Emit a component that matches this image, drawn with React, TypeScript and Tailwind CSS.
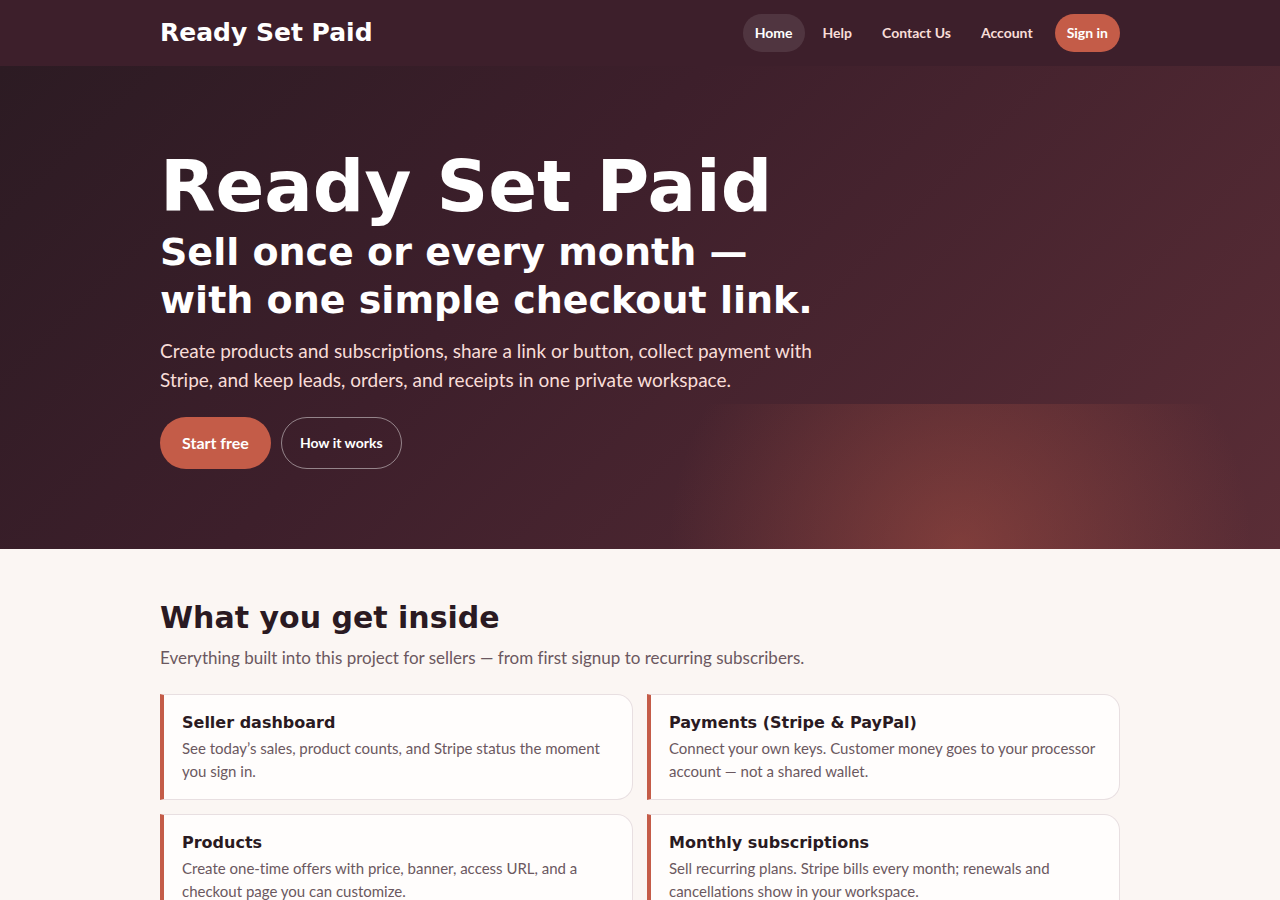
const navLinks = [
  { label: 'Home', active: true },
  { label: 'Help', active: false },
  { label: 'Contact Us', active: false },
  { label: 'Account', active: false },
];

const features = [
  {
    title: 'Seller dashboard',
    text: 'See today’s sales, product counts, and Stripe status the moment you sign in.',
  },
  {
    title: 'Payments (Stripe & PayPal)',
    text: 'Connect your own keys. Customer money goes to your processor account — not a shared wallet.',
  },
  {
    title: 'Products',
    text: 'Create one-time offers with price, banner, access URL, and a checkout page you can customize.',
  },
  {
    title: 'Monthly subscriptions',
    text: 'Sell recurring plans. Stripe bills every month; renewals and cancellations show in your workspace.',
  },
];

function Header() {
  return (
    <header className="bg-[#3d1f2b]">
      <div className="max-w-[960px] mx-auto py-3.5 flex items-center justify-between">
        <a
          href="#"
          className="font-['DejaVu_Sans',sans-serif] text-[25px] leading-6 font-bold text-white"
        >
          Ready Set Paid
        </a>
        <nav className="flex items-center gap-1.5">
          {navLinks.map((link) => (
            <a
              key={link.label}
              href="#"
              className={`px-3 py-2 rounded-full text-sm leading-[22px] font-bold ${
                link.active ? 'bg-white/10 text-white' : 'text-[#f8ddd8]'
              }`}
            >
              {link.label}
            </a>
          ))}
          <a
            href="#"
            className="ml-1 px-3 py-2 rounded-full bg-[#c45c48] text-sm leading-[22px] font-bold text-white"
          >
            Sign in
          </a>
        </nav>
      </div>
    </header>
  );
}

function Hero() {
  return (
    <section className="relative overflow-hidden bg-[linear-gradient(135deg,#2c1b23_0%,#3d1f2b_40%,#5a2d36_100%)]">
      {/* Warm glow in the lower right */}
      <div className="absolute left-[40%] -right-[10%] -bottom-[30%] h-[60%] bg-[radial-gradient(circle,rgba(196,92,72,0.4),transparent_62%)]" />
      <div className="relative max-w-[960px] mx-auto py-20">
        <div className="pt-3">
          <h1 className="font-['DejaVu_Sans',sans-serif] text-[72px] leading-[56px] font-bold text-white">
            Ready Set Paid
          </h1>
          <p className="mt-3.5 font-['DejaVu_Sans',sans-serif] text-[38px] leading-[48px] font-bold text-white">
            Sell once or every month —<br />
            with one simple checkout link.
          </p>
          <p className="mt-3 max-w-[700px] text-[19px] leading-[29px] text-[#f8ddd8]">
            Create products and subscriptions, share a link or button, collect payment with Stripe,
            and keep leads, orders, and receipts in one private workspace.
          </p>
          <div className="mt-[23px] flex gap-2.5">
            <a
              href="#"
              className="px-[22px] py-3.5 rounded-full bg-[#c45c48] text-base leading-6 font-bold text-white"
            >
              Start free
            </a>
            <a
              href="#"
              className="px-[18px] py-3.5 rounded-full border border-white/45 text-sm leading-[22px] font-bold text-white"
            >
              How it works
            </a>
          </div>
        </div>
      </div>
    </section>
  );
}

function Features() {
  return (
    <section className="max-w-[960px] mx-auto pt-12 pb-16">
      <h2 className="font-['DejaVu_Sans',sans-serif] text-[30px] leading-[42px] font-bold text-[#2a1a22]">
        What you get inside
      </h2>
      <p className="mt-1.5 text-[17px] leading-[26px] text-[#6b5860]">
        Everything built into this project for sellers — from first signup to recurring subscribers.
      </p>
      <div className="mt-[23px] grid grid-cols-2 gap-3.5">
        {features.map((feature) => (
          <article
            key={feature.title}
            className="border border-l-4 border-[#e8dfe1] border-l-[#c45c48] rounded-r-2xl bg-[#fffdfc] px-[18px] py-4"
          >
            <h3 className="font-['DejaVu_Sans',sans-serif] text-[16px] leading-[24px] font-bold text-[#2a1a22]">
              {feature.title}
            </h3>
            <p className="mt-0.5 text-[15px] leading-[23px] text-[#6b5860]">{feature.text}</p>
          </article>
        ))}
      </div>
    </section>
  );
}

export default function App() {
  return (
    <div className="min-h-screen bg-[#fbf6f3] font-['Lato',sans-serif] [font-variant-ligatures:none]">
      <Header />
      <main>
        <Hero />
        <Features />
      </main>
    </div>
  );
}
